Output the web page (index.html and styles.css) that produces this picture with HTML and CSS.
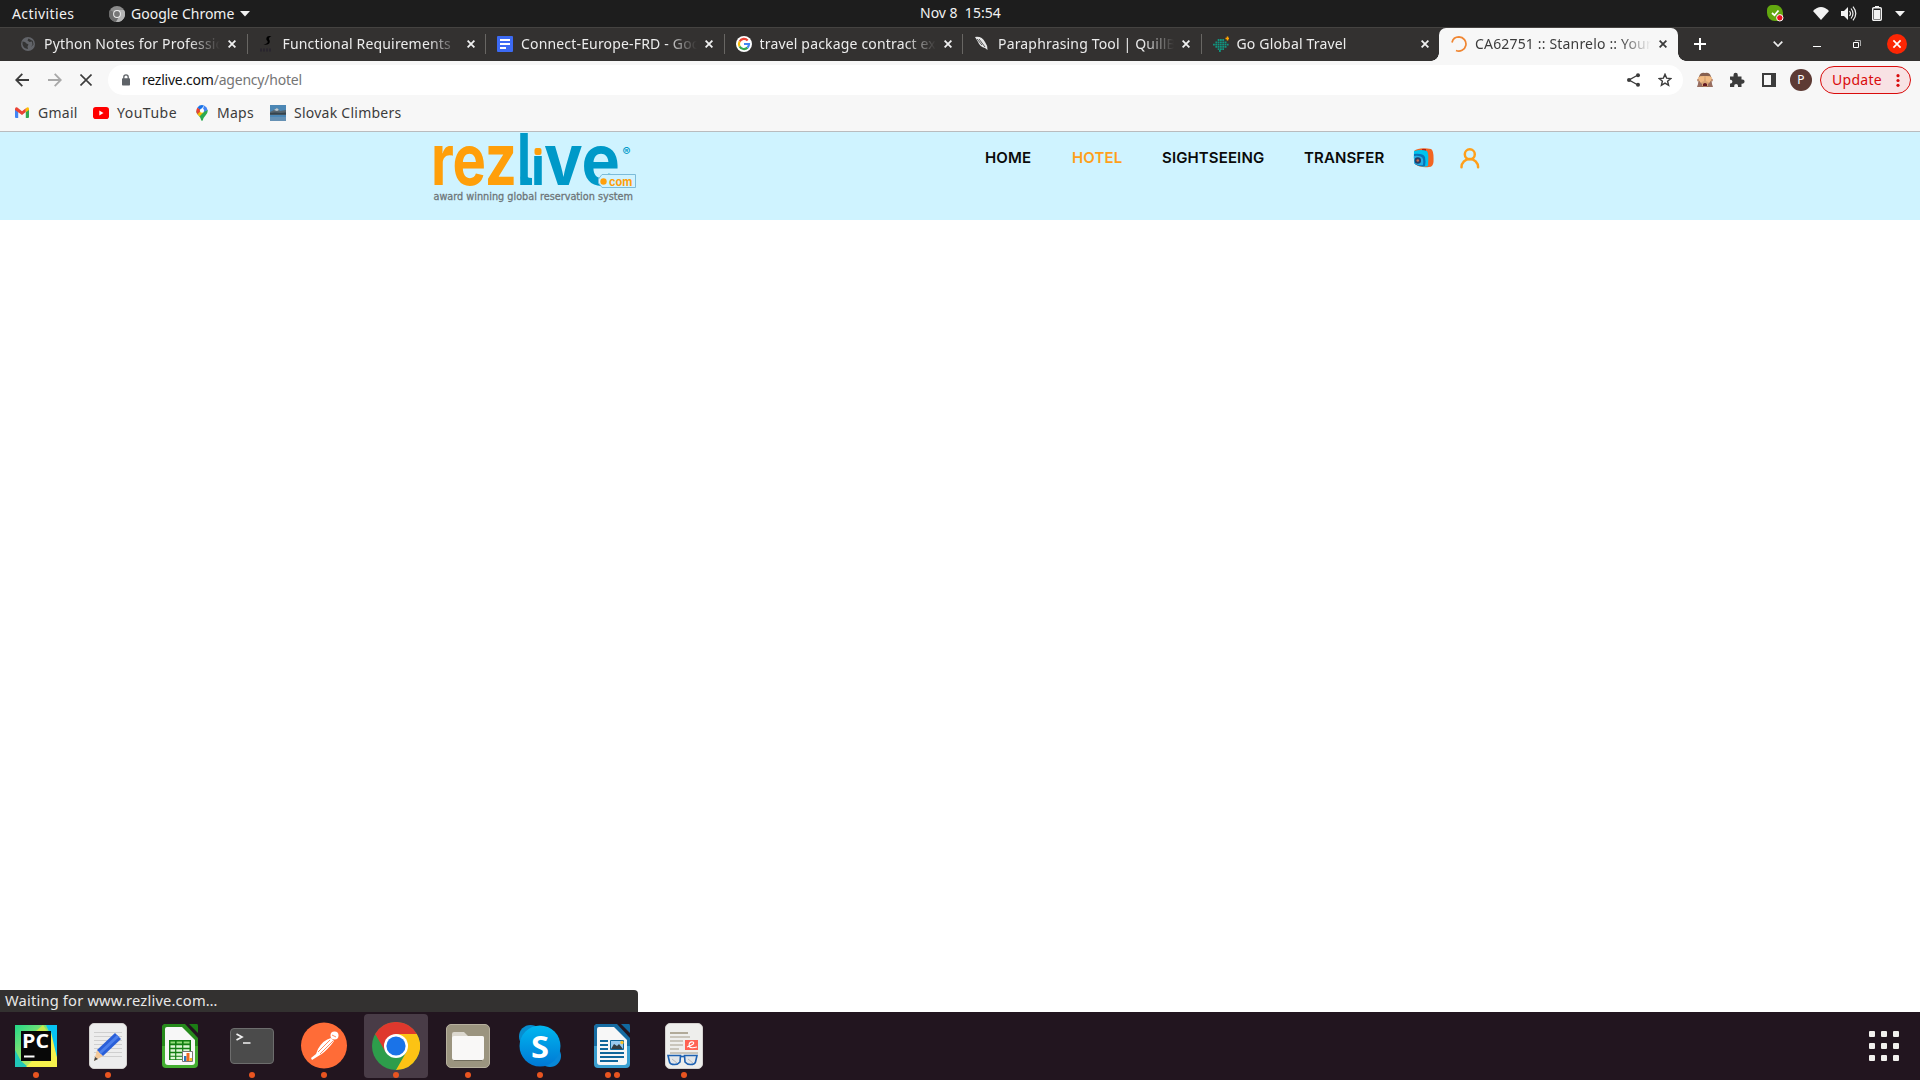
FILE: index.html
```html
<!DOCTYPE html>
<html lang="en">
<head>
<meta charset="utf-8">
<title>CA62751 :: Stanrelo</title>
<link rel="stylesheet" href="styles.css">
</head>
<body>
<div class="desktop">
  <header class="topbar">
    <span class="activities">Activities</span>
    <div class="appmenu">
      <svg width="16" height="16" viewBox="0 0 16 16"><circle cx="8" cy="8" r="8" fill="#8b8b8b"/><path d="M8 8L1 4A8 8 0 0 0 7 16L11 9Z" fill="#6d6d6d"/><path d="M8 4H15A8 8 0 0 1 7 16L11 9Z" fill="#b4b4b4"/><circle cx="8" cy="8" r="3.9" fill="#eee"/><circle cx="8" cy="8" r="2.9" fill="#777"/></svg>
      <span class="appname">Google Chrome</span>
      <svg width="10" height="6" viewBox="0 0 10 6"><path d="M0 0H10L5 5.5Z" fill="#f2f2f2"/></svg>
    </div>
    <span class="clock">Nov 8&nbsp; 15:54</span>
    <div class="tray">
      <svg class="tray-skype" width="17" height="17" viewBox="0 0 17 17"><path d="M5 0H9A8 8 0 0 1 16 8V12A4 4 0 0 1 12 16H8A8 8 0 0 1 0 8V5A5 5 0 0 1 5 0Z" fill="#62a70f"/><path d="M5 8L7.5 10.3L11.5 5.5" stroke="#fff" stroke-width="1.8" fill="none"/><circle cx="12.8" cy="12.8" r="3.2" fill="#e81123" stroke="#fff"/></svg>
      <svg class="tray-wifi" width="16" height="13" viewBox="0 0 16 13"><path d="M0 4Q8-4 16 4L8 13Z" fill="#f2f2f2"/></svg>
      <svg class="tray-volume" width="16" height="15" viewBox="0 0 16 15"><path d="M0 5H3L7 1V14L3 10H0Z" fill="#f2f2f2"/><path d="M8.500 5Q10.500 7.500 8.500 10M10 2.500Q14 7.500 10 12.500M12 .7Q17.500 7.500 12 14.300" stroke="#eee" stroke-width="1.2" fill="none"/></svg>
      <svg class="tray-battery" width="10" height="15" viewBox="0 0 10 15"><path d="M3 0H7V2H3Z" fill="#f2f2f2"/><rect x=".7" y="1.700" width="8.600" height="12.600" rx="1" fill="none" stroke="#f2f2f2" stroke-width="1.400"/><path d="M2 4H8V13H2Z" fill="#f2f2f2"/></svg>
      <svg width="10" height="6" viewBox="0 0 10 6"><path d="M0 0H10L5 5.500Z" fill="#f2f2f2"/></svg>
    </div>
  </header>

  <div class="tabstrip">
    <div class="tab">
      <svg class="favicon" viewBox="0 0 16 16"><circle cx="8" cy="8" r="7" fill="#626469"/><path d="M2.500 5.500L5 6L6.500 7.500L8.500 8.500L7.500 10.500L8 13Q3.500 12.500 2.500 8.500ZM8.500 2.500L7.500 4.500L9.500 6L12 5.500L12.500 8.500L11 11L13.500 8.500L12.800 5Z" fill="#343434"/></svg>
      <span class="title">Python Notes for Professionals</span>
      <svg class="close" viewBox="0 0 8 8"><path d="M.6 .6L7.400 7.400M7.400 .6L.6 7.400"/></svg>
    </div>
    <div class="tab">
      <svg class="favicon" viewBox="0 0 16 16"><path d="M12.500 0Q6.500 -.5 7.500 4Q10 6 7.500 7.500Q6 8.500 4.500 8.500Q10 9.500 10.800 6Q10.800 4 9.800 3Q10 1 12.500 0Z" fill="#000"/><path d="M1 14H12" stroke="#29252d" stroke-width="3" stroke-dasharray="2 1"/></svg>
      <span class="title">Functional Requirements</span>
      <svg class="close" viewBox="0 0 8 8"><path d="M.6 .6L7.400 7.400M7.400 .6L.6 7.400"/></svg>
    </div>
    <div class="tab">
      <svg class="favicon" viewBox="0 0 16 16"><rect width="16" height="16" rx="1" fill="#3c6af3"/><path d="M3 4H13M3 8H13M3 12H9" stroke="#fff" stroke-width="2"/></svg>
      <span class="title">Connect-Europe-FRD - Goog</span>
      <svg class="close" viewBox="0 0 8 8"><path d="M.6 .6L7.400 7.400M7.400 .6L.6 7.400"/></svg>
    </div>
    <div class="tab">
      <svg class="favicon" viewBox="0 0 16 16"><circle cx="8" cy="8" r="8" fill="#fff"/><g fill="none" stroke-width="2.200"><path d="M3.600 5.500A5 5 0 0 1 11.700 4.400" stroke="#ea4335"/><path d="M3.600 10.500A5 5 0 0 1 3.600 5.500" stroke="#fbbc05"/><path d="M11.500 11.600A5 5 0 0 1 3.600 10.500" stroke="#34a853"/><path d="M8 8H13A5 5 0 0 1 11.500 11.600" stroke="#4285f4"/></g></svg>
      <span class="title">travel package contract exa</span>
      <svg class="close" viewBox="0 0 8 8"><path d="M.6 .6L7.400 7.400M7.400 .6L.6 7.400"/></svg>
    </div>
    <div class="tab">
      <svg class="favicon" viewBox="0 0 16 16"><path d="M1 1Q8 0 11 6Q14 10 13.500 14L11 12Q6 11 4 6Z" fill="#e7e7e7"/><path d="M5 3L11 11M3 3L8 9" stroke="#333" stroke-width=".8"/></svg>
      <span class="title">Paraphrasing Tool | QuillBot</span>
      <svg class="close" viewBox="0 0 8 8"><path d="M.6 .6L7.400 7.400M7.400 .6L.6 7.400"/></svg>
    </div>
    <div class="tab last">
      <svg class="favicon" viewBox="0 0 16 16"><g stroke="#11957f" stroke-width="1.800" stroke-dasharray="1.800 .5"><path d="M4.700 4H11.600M2.400 6.300H14M0 8.600H16M2.400 10.900H14M4.700 13.200H11M6 15H8"/></g><path d="M14.500 .5V4.500M12.500 2.500H16.500" stroke="#ffa400" stroke-width="1.500"/></svg>
      <span class="title">Go Global Travel</span>
      <svg class="close" viewBox="0 0 8 8"><path d="M.6 .6L7.400 7.400M7.400 .6L.6 7.400"/></svg>
    </div>
    <div class="tab active">
      <svg class="favicon" viewBox="0 0 16 16"><path d="M1 6.500A7.200 7.200 0 0 1 8 .9A7.100 7.100 0 1 1 5 14.500" fill="none" stroke="#f08632" stroke-width="1.700"/></svg>
      <span class="title">CA62751 :: Stanrelo :: Your</span>
      <svg class="close" viewBox="0 0 8 8"><path d="M.6 .6L7.400 7.400M7.400 .6L.6 7.400"/></svg>
    </div>
    <svg class="newtab" width="12" height="12" viewBox="0 0 12 12"><path d="M6 0V12M0 6H12" stroke="#fff" stroke-width="2"/></svg>
    <div class="winctl">
      <svg width="10" height="6" viewBox="0 0 10 6"><path d="M.7 .7L5 5L9.300 .7" stroke="#eee" stroke-width="1.700" fill="none"/></svg>
      <svg class="min" width="8" height="2" viewBox="0 0 8 2"><path d="M0 .5H8" stroke="#fff"/></svg>
      <svg width="8" height="8" viewBox="0 0 8 8"><path d="M.5 2.500H5.500V7.500H.5Z" stroke="#fff" fill="none"/><path d="M2 .5H7.500V6" stroke="#aaa" fill="none"/></svg>
      <svg width="20" height="20" viewBox="0 0 20 20"><circle cx="10" cy="10" r="10" fill="#fc2604"/><path d="M6.400 6.400L13.600 13.600M13.600 6.400L6.400 13.600" stroke="#fff" stroke-width="1.700"/></svg>
    </div>
  </div>

  <div class="toolbar">
    <div class="navbtns">
      <svg width="14" height="14" viewBox="0 0 14 14"><path d="M14 7H1.500M7.300 .8L1.200 7L7.300 13.200" stroke="#3c3c3c" stroke-width="1.800" fill="none"/></svg>
      <svg width="14" height="14" viewBox="0 0 14 14"><path d="M0 7H12.500M6.700 .8L12.800 7L6.700 13.200" stroke="#a8a8a8" stroke-width="1.800" fill="none"/></svg>
      <svg width="12" height="12" viewBox="0 0 12 12"><path d="M.5 .5L11.500 11.500M11.500 .5L.5 11.500" stroke="#3c3c3c" stroke-width="1.600"/></svg>
    </div>
    <div class="omnibox">
      <svg width="8" height="12" viewBox="0 0 8 12"><path d="M1.800 5V3A2.200 2.200 0 0 1 6.200 3V5" stroke="#5f6368" stroke-width="1.300" fill="none"/><rect y="4.300" width="8" height="7.200" rx=".8" fill="#5f6368"/></svg>
      <span class="url">rezlive.com<span class="path">/agency/hotel</span></span>
      <svg class="share" width="13" height="14" viewBox="0 0 13 14"><path d="M11 2L2 7L11 12" stroke="#3c3c3c" stroke-width="1.400" fill="none"/><g fill="#3c3c3c"><circle cx="11" cy="2.200" r="2"/><circle cx="2" cy="7" r="2"/><circle cx="11" cy="11.800" r="2"/></g></svg>
      <svg width="14" height="14" viewBox="0 0 14 14"><path d="M7 1.300L8.600 5.100L12.800 5.500L9.600 8.200L10.600 12.300L7 10.100L3.400 12.300L4.400 8.200L1.200 5.500L5.400 5.100Z" stroke="#3c3c3c" stroke-width="1.400" fill="none"/></svg>
    </div>
    <div class="exts">
      <svg width="16" height="16" viewBox="0 0 16 16"><path d="M2 5Q3 0 8 1Q13 0 14 5L15 15H1Z" fill="#876050"/><circle cx="1.500" cy="8" r="1.500" fill="#bd8e72"/><circle cx="14.500" cy="8" r="1.500" fill="#bd8e72"/><path d="M3 4H13V13Q8 16 3 13Z" fill="#d7a475"/><path d="M1 5L7.500 4L7 9L3 11ZM15 5L8.500 4L9 9L13 11Z" fill="#f1ba83"/><path d="M6 12Q8 10 10 12V14H6Z" fill="#641923"/><path d="M0 15L2 9L5 12L5 15ZM16 15L14 9L11 12L11 15Z" fill="#976e61"/></svg>
      <svg width="16" height="16" viewBox="0 0 16 16"><path d="M1 4.500H4.500V3A2.100 2.100 0 0 1 8.800 3V4.500H12.500V7.500H13.500A2 2 0 0 1 13.500 11.700H12.500V15H9V13.800A1.900 1.900 0 0 0 5.200 13.800V15H1V11.500H2A2 2 0 0 0 2 7.700H1Z" fill="#3c3c3c"/></svg>
      <svg width="14" height="14" viewBox="0 0 14 14"><path d="M0 0H14V14H0ZM2 2V12H9V2Z" fill="#3c3c3c" fill-rule="evenodd"/></svg>
      <span class="avatar">P</span>
    </div>
    <div class="update"><span class="update-label">Update</span><svg width="4" height="13" viewBox="0 0 4 13"><g fill="#d90b0b"><circle cx="2" cy="1.700" r="1.600"/><circle cx="2" cy="6.500" r="1.600"/><circle cx="2" cy="11.300" r="1.600"/></g></svg></div>
  </div>

  <nav class="bookmarks">
    <span class="bm"><svg width="14" height="11" viewBox="0 0 14 11"><path d="M0 2L3.200 4V11H1Q0 11 0 10Z" fill="#4285f4"/><path d="M14 2L10.800 4V11H13Q14 11 14 10Z" fill="#34a853"/><path d="M0 2Q0 0 2 .3L7 4.200L10.800 1.200V5L7 8L0 3Z" fill="#ea4335"/><path d="M10.800 1.200Q14-1 14 2V3L10.800 5.300Z" fill="#fbbc04"/></svg><span class="b1">Gmail</span></span>
    <span class="bm"><svg width="16" height="12" viewBox="0 0 16 12"><rect width="16" height="12" rx="2.800" fill="#f00"/><path d="M6.300 3.500V8.500L10.500 6Z" fill="#fff"/></svg><span class="b2">YouTube</span></span>
    <span class="bm"><svg width="12" height="16" viewBox="0 0 12 16"><path d="M1.300 9Q.2 7.500 .3 5.700L6 5.700L11.700 5Q12 8 9.500 10.500Q7.500 12.500 6.800 15.200Q6 16.200 5.200 15.200Q4.500 12.500 3 11Z" fill="#2bab50"/><path d="M1.500 2.400L5 5L1.700 9.500Q.2 8 .3 5.700Q.3 4 1.500 2.400Z" fill="#ea4335"/><path d="M1.500 2.400Q4-.8 8 .4L4.500 5.200Z" fill="#1a73e8"/><path d="M8 .4Q11 1.500 11.600 5L6 8Z" fill="#4285f4"/><path d="M1.500 9L4.300 6.500L7.600 7.300L3.500 11.600Z" fill="#fbbc04"/><circle cx="6" cy="5.700" r="2.100" fill="#fff"/></svg><span class="b3">Maps</span></span>
    <span class="bm"><svg width="16" height="16" viewBox="0 0 16 16"><path d="M0 0H16V16H0Z" fill="#4c87b5"/><path d="M0 7L4 5L7 3L10 6L16 5V10H0Z" fill="#56646d"/><path d="M4 5L7 3L9 5L7 6Z" fill="#c0cdd6"/><path d="M0 8L5 7.500L11 8L16 7.500V9.500H0Z" fill="#34434d"/><path d="M0 12H16V16H0Z" fill="#6691b4"/></svg><span class="b4">Slovak Climbers</span></span>
  </nav>

  <main class="page">
    <div class="site-header">
      <svg class="logo" width="206" height="72" viewBox="0 0 206 72">
        <g class="word">
          <text x="-2" y="53" textLength="86" lengthAdjust="spacingAndGlyphs" fill="#ff9f0a">rez</text>
          <text x="84" y="53" textLength="14" lengthAdjust="spacingAndGlyphs" fill="#0099c8">l</text>
          <text class="short" x="98" y="53" textLength="14" lengthAdjust="spacingAndGlyphs" fill="#0099c8">i</text>
          <text x="111" y="53" textLength="76" lengthAdjust="spacingAndGlyphs" fill="#0099c8">ve</text>
        </g>
        <path d="M92 40Q92 46 99 46V53H94Q87.500 53 87.500 45Z" fill="#0099c8"/>
        <rect x="98" y="10" width="14" height="13" fill="#cff3ff"/>
        <rect x="101.500" y="16" width="7" height="7" rx="2" fill="#ff9f0a"/>
        <path d="M169 42.500H202.500V55.500H169L165.500 51V47Z" fill="#cff3ff" stroke="#7cbbd9"/>
        <circle cx="170.500" cy="49.500" r="3.200" fill="#ff9f0a"/>
        <text class="com" x="176" y="53.500" textLength="23.500" lengthAdjust="spacingAndGlyphs">com</text>
        <text class="reg" x="189.500" y="24">®</text>
        <text class="tagline" x=".5" y="67.500" textLength="199.500" lengthAdjust="spacingAndGlyphs">award winning global reservation system</text>
      </svg>
      <div class="menu">
        <span class="m1">HOME</span><span class="m2 current">HOTEL</span><span class="m3">SIGHTSEEING</span><span class="m4">TRANSFER</span>
        <svg class="bag" width="21" height="20" viewBox="0 0 21 20"><path d="M1 3Q6-1 18 1Q21 2 20.500 14Q20 19 16 19Q7 20 2 16Z" fill="#f26522"/><path d="M9 1H13V3H9Z" fill="#b51e16"/><path d="M1 3Q9 1 14 3Q16 5 15 18Q9 20 2 16Q0 10 1 3Z" fill="#00c3ee"/><path d="M1 6Q10 5 12 9Q13 14 12 18Q5 19 1 15Z" fill="#0872b8"/><path d="M1 8Q8 7 10 11Q10.500 14 10 17Q5 18 1 15Z" fill="#23afe5"/><circle cx="4.800" cy="12.500" r="3.200" fill="#273c66"/><circle cx="4.800" cy="12.500" r="1.300" fill="#ca6b4d"/></svg>
        <svg width="20" height="21" viewBox="0 0 20 21"><g fill="none" stroke="#ff9f1a" stroke-width="2.500" stroke-linecap="round"><circle cx="9.800" cy="6.300" r="5"/><path d="M1.500 19.300A8.300 8.300 0 0 1 18.100 19.300"/></g></svg>
      </div>
    </div>
    <div class="status">Waiting for www.rezlive.com…</div>
  </main>

  <footer class="dock">
    <div class="apps">
      <div class="app"><svg viewBox="0 0 48 48"><defs><linearGradient id="pc" x1="0" y1="0" x2="1" y2="1"><stop offset="0" stop-color="#21d789"/><stop offset=".5" stop-color="#9be56b"/><stop offset="1" stop-color="#fcf84a"/></linearGradient></defs><path d="M3 3H45V45H3Z" fill="url(#pc)"/><path d="M34 3H45V37L38 12Z" fill="#07c3f2"/><path d="M24 9L31 3L35 9Z" fill="#c7e94c"/><path d="M3 28L9 39L16 45H3Z" fill="#20c7b8"/><path d="M39 10L45 36V45H14L20 39H39Z" fill="#f6f14c"/><path d="M9 9H39V39H9Z" fill="#080808"/><path d="M12 33.500H22.500V35.500H12Z" fill="#fff"/><text class="pc" x="10" y="26" textLength="27" lengthAdjust="spacingAndGlyphs">PC</text></svg><i class="dots"><b></b></i></div>
      <div class="app"><svg viewBox="0 0 48 48"><rect x="5.500" y="1.500" width="37" height="45" rx="4.500" fill="#ededed" stroke="#d4d1cf"/><path d="M10 10.500H38M10 14.500H38M10 18.500H38M10 22.500H38M10 26.500H38M10 30.500H38M10 34.500H38" stroke="#cfcfcf"/><path d="M10 39L13 28L19 34Z" fill="#f4c99a"/><path d="M10 39L11 35L14 37Z" fill="#444"/><path d="M13 28L31 11L37 17L19 34Z" fill="#2a5fd8"/><path d="M15 30L33 13L35 15L17 32Z" fill="#4d80ec"/></svg><i class="dots"><b></b></i></div>
      <div class="app"><svg viewBox="0 0 48 48"><path d="M10 2H27L42 17V42Q42 46 38 46H10Q6 46 6 42V6Q6 2 10 2Z" fill="#43ad30"/><path d="M10 2H29L42 16V24H6V6Q6 2 10 2Z" fill="#268a1b"/><path d="M11 5H26L39 18V40Q39 43 36 43H12Q9 43 9 40V7Q9 5 11 5Z" fill="#f7f7f7"/><path d="M33 2H41Q42 2 42 4V11Z" fill="#1c7d15"/><path d="M13 18H35V38H13Z" fill="#137d11"/><g fill="#92dd79"><path d="M14.500 19.500H19V21.500H14.500ZM20.500 19.500H26V21.500H20.500ZM27.500 19.500H33.500V21.500H27.500Z"/></g><g stroke="#dff6d5" stroke-width="2.500"><path d="M14.500 24.500H33.500M14.500 28.500H33.500M14.500 32.500H33.500M14.500 36H33.500"/></g><path d="M19.700 18V38M26.700 18V38" stroke="#137d11" stroke-width="1.200"/><path d="M26.500 29.500H36.500V39.500H26.500Z" fill="#fff" stroke="#777"/><path d="M28 34H30.500V39H28Z" fill="#2879bf"/><path d="M30.500 31H33.500V39H30.500Z" fill="#ef6a20"/><path d="M33.500 36H36V39H33.500Z" fill="#f4be28"/></svg><i class="dots"></i></div>
      <div class="app"><svg viewBox="0 0 48 48"><rect x="2.500" y="6.500" width="43" height="35" rx="3.500" fill="#4b4b4b" stroke="#6d6d6d"/><path d="M8.500 12L14 15L8.500 18M15 21H22.500" fill="none" stroke="#f2f2f2" stroke-width="1.700"/></svg><i class="dots"><b></b></i></div>
      <div class="app"><svg viewBox="0 0 48 48"><circle cx="24" cy="23.500" r="23" fill="#ff6c37"/><circle cx="34.500" cy="13.500" r="4" fill="#fff"/><path d="M31 16Q23 18 18 27L16 32L11 36L12 38L20 33Q24 31 31 23L34 19Z" fill="#fff"/><path d="M30 18L18 30M33 19L20 32M32 13L36 15" stroke="#ff6c37" stroke-width=".8"/></svg><i class="dots"><b></b></i></div>
      <div class="app focused"><svg viewBox="0 0 48 48"><circle cx="24" cy="24" r="24" fill="#2d9d4b"/><path d="M3.200 12A24 24 0 0 1 44.800 12L34 24H14Z" fill="#df382d"/><path d="M24 12H44.800A24 24 0 0 1 24 48L34.400 30Z" fill="#fcc314"/><path d="M3.200 12L13.600 30L24 24L24 12Z" fill="#df382d"/><circle cx="24" cy="24" r="12" fill="#fff"/><circle cx="24" cy="24" r="9.600" fill="#1a73e8"/></svg><i class="dots"><b></b></i></div>
      <div class="app"><svg viewBox="0 0 48 48"><rect x="2.500" y="2.500" width="43" height="43" rx="4.500" fill="#9b947f" stroke="#b7b09e"/><path d="M8 14V12Q8 10 10 10H20L24 14H38Q40 14 40 16V20H8Z" fill="#dcd8cf"/><rect x="8" y="14" width="32" height="24" rx="2" fill="#f9f8f7"/><path d="M10 38.500H38" stroke="#706b5b"/></svg><i class="dots"><b></b></i></div>
      <div class="app"><svg viewBox="0 0 48 48"><defs><linearGradient id="sk" x2="0" y2="1"><stop stop-color="#00b7f0"/><stop offset="1" stop-color="#0078d4"/></linearGradient></defs><circle cx="14.500" cy="14.500" r="11.500" fill="#078dcf"/><circle cx="34" cy="34" r="11" fill="#0788d8"/><circle cx="24" cy="24" r="20.500" fill="url(#sk)"/><text class="skype" x="15" y="35.500" textLength="18" lengthAdjust="spacingAndGlyphs">S</text></svg><i class="dots"><b></b></i></div>
      <div class="app"><svg viewBox="0 0 48 48"><path d="M10 2H27L42 17V42Q42 46 38 46H10Q6 46 6 42V6Q6 2 10 2Z" fill="#3a9fd0"/><path d="M10 2H29L42 16V24H6V6Q6 2 10 2Z" fill="#166ca2"/><path d="M11 5H26L39 18V40Q39 43 36 43H12Q9 43 9 40V7Q9 5 11 5Z" fill="#f7f7f7"/><path d="M33 2H41Q42 2 42 4V11Z" fill="#1169a0"/><path d="M12 19H20M12 23H20M12 27H20M12 31H36M12 35H36M12 39H30" stroke="#11679b" stroke-width="1.800"/><path d="M22.500 18.500H35.500V27.500H22.500Z" fill="#9bcaee" stroke="#11679b"/><path d="M23 27L26 22L29 24L31 22L35 27Z" fill="#343d42"/><circle cx="34" cy="20.500" r="1.700" fill="#fbc32b"/></svg><i class="dots"><b></b><b></b></i></div>
      <div class="app"><svg viewBox="0 0 48 48"><rect x="5.500" y="1.500" width="37" height="45" rx="4.500" fill="#eeeeec" stroke="#d4d1cf"/><path d="M10 11H28" stroke="#b1aa99" stroke-width="2"/><path d="M10 15H30M10 19H23M10 23H23M10 27H19M10 31H38" stroke="#c9c5bb" stroke-width="1.800"/><path d="M25 18H38V28H25Z" fill="#ff6253"/><path d="M27 25Q36 22 33 20Q29 19 29 24Q30 27 37 25" fill="none" stroke="#fff" stroke-width="1.100"/><g stroke="#1e61b1" stroke-width="1.600" fill="#e2e6ea"><path d="M8 33.500H20.500L20 40Q18 42.500 14.500 42.500Q10 42.500 9.500 40ZM37 33.500H24.500L25 40Q27 42.500 30.500 42.500Q35 42.500 35.500 40Z"/><path d="M20 34.500H25"/></g><path d="M12 37L17 41M28 37L33 41" stroke="#bbb"/></svg><i class="dots"><b></b></i></div>
    </div>
    <svg class="grid" width="30" height="30" viewBox="0 0 30 30"><g fill="#f2f0ee"><rect width="6" height="6" rx="1"/><rect x="12" width="6" height="6" rx="1"/><rect x="24" width="6" height="6" rx="1"/><rect y="12" width="6" height="6" rx="1"/><rect x="12" y="12" width="6" height="6" rx="1"/><rect x="24" y="12" width="6" height="6" rx="1"/><rect y="24" width="6" height="6" rx="1"/><rect x="12" y="24" width="6" height="6" rx="1"/><rect x="24" y="24" width="6" height="6" rx="1"/></g></svg>
  </footer>
</div>
</body>
</html>
```
FILE: styles.css
```css
* { box-sizing: border-box; }
body { margin: 0; font-family: "Noto Sans", "Open Sans", sans-serif; font-size: 14px; }
svg { display: block; flex: none; }
.desktop { width: 1920px; height: 1080px; display: flex; flex-direction: column; overflow: hidden; background: #fff; white-space: nowrap; }

.topbar { height: 27px; flex: none; background: #1d1d1d; color: #f2f2f2; display: grid; grid-template-columns: 109px 811px 1fr auto; align-items: center; padding-right: 15px; }
.activities { padding-left: 12px; letter-spacing: .4px; }
.appmenu { display: flex; align-items: center; }
.appname { width: 104px; margin: 0 5px 0 6px; }
.clock { line-height: 18px; padding-bottom: 1px; }
.tray { display: flex; align-items: center; }
.tray-skype { margin-right: 29px; }
.tray-wifi { margin-right: 12px; }
.tray-volume { margin-right: 15px; }
.tray-battery { margin-right: 13px; }

.tabstrip { height: 34px; flex: none; background: #333130; border-top: 1px solid #454341; display: flex; align-items: stretch; padding-left: 8px; color: #ececec; letter-spacing: .17px; }
.tab { position: relative; width: 238.500px; flex: none; display: flex; align-items: center; padding: 0 0 1px 12px; }
.tab::after { content: ""; position: absolute; right: -1px; top: 6px; width: 1px; height: 20px; background: #686663; }
.tab.last::after { display: none; }
.favicon { width: 16px; height: 16px; }
.title { width: 176px; margin-left: 8px; padding-bottom: 2px; overflow: hidden; -webkit-mask-image: linear-gradient(90deg, #000 145px, transparent 176px); mask-image: linear-gradient(90deg, #000 145px, transparent 176px); }
.close { width: 8px; height: 8px; margin-left: 8px; fill: none; stroke: #f0f0f0; stroke-width: 1.800; }
.tab.active { background: #f7f7f7; color: #3c3c3c; border-radius: 7px 7px 0 0; }
.tab.active .close { stroke: #3c3c3c; }
.tab.active::before, .tab.active::after { content: ""; position: absolute; top: auto; bottom: 0; width: 8px; height: 8px; }
.tab.active::before { left: -8px; background: radial-gradient(circle at 0 0, transparent 7.500px, #f7f7f7 8px); }
.tab.active::after { right: -8px; background: radial-gradient(circle at 100% 0, transparent 7.500px, #f7f7f7 8px); }
.newtab { margin: 10px 0 0 16px; }
.winctl { margin-left: auto; display: flex; align-items: center; gap: 30px; padding: 0 13px 1px 0; }
.winctl .min { margin: 5px 2px 0 0; }
.winctl svg:last-child { margin-left: -4px; }

.toolbar { height: 38px; flex: none; background: #f7f7f7; display: flex; align-items: center; padding: 0 9px 0 15px; }
.navbtns { display: flex; align-items: center; gap: 18.500px; width: 93px; }
.omnibox { width: 1575px; height: 30px; border-radius: 15px; background: #fff; display: flex; align-items: center; padding: 0 11px 0 14px; }
.url { margin-left: 12px; color: #111; letter-spacing: -.22px; padding-bottom: 1px; }
.path { color: #757575; }
.share { margin-left: auto; margin-right: 18px; }
.exts { display: flex; align-items: center; gap: 16px; margin-left: 14px; }
.exts svg:nth-child(3) { margin-left: 1px; margin-right: -2px; }
.avatar { width: 22px; height: 22px; border-radius: 50%; background: #5d3a34; color: #fff; font-size: 12px; line-height: 22px; text-align: center; }
.update { width: 91px; height: 28px; margin-left: auto; border: 1px solid #d90b0b; border-radius: 14px; background: #f8e2e4; color: #d90b0b; display: flex; align-items: center; justify-content: space-between; padding: 0 10px 0 11px; letter-spacing: .3px; }
.update-label { padding-bottom: 1px; }

.bookmarks { height: 33px; flex: none; background: #f7f7f7; border-bottom: 1px solid #b9bbbe; display: flex; padding: 0 15px 5px; color: #3c3c3c; letter-spacing: .25px; }
.bm { display: flex; align-items: center; }
.bm span { margin-left: 8px; }
.bm .b1 { width: 55px; margin-left: 9px; }
.bm .b2 { width: 79px; letter-spacing: .5px; }
.bm .b3 { width: 53px; margin-left: 9px; }

.page { flex: 1; display: flex; flex-direction: column; justify-content: space-between; }
.site-header { height: 88px; background: #cff3ff; display: flex; align-items: flex-start; padding-left: 433px; }
.word { font: 700 71px Inter, sans-serif; }
.word .short { font-size: 53px; }
.com { font: 700 11.500px Inter, sans-serif; fill: #ff9f0a; }
.reg { font: 600 12px Inter, sans-serif; fill: #0099c8; }
.tagline { font: 500 10.500px "DejaVu Sans", sans-serif; fill: #6d7578; stroke: #6d7578; stroke-width: .3px; }
.menu { display: flex; align-items: center; margin: 15px 0 0 346px; height: 22px; font: 600 15px/22px Inter, sans-serif; letter-spacing: .12px; color: #0a0a0a; }
.current { color: #ff9f1a; }
.m1 { width: 87px; } .m2 { width: 90px; } .m3 { width: 142px; } .m4 { width: 109px; }
.bag { margin-right: 26px; }
.status { width: 638px; height: 22px; background: #333130; color: #e8e8e8; font-size: 14.700px; letter-spacing: .18px; line-height: 21px; padding-left: 5px; border-radius: 0 4px 0 0; }

.dock { height: 68px; flex: none; background: #22151f; display: flex; justify-content: space-between; align-items: flex-start; padding: 2px 21px 0 4px; }
.apps { display: flex; gap: 8px; }
.app { width: 64px; height: 64px; border-radius: 4px; display: flex; flex-direction: column; align-items: center; padding-top: 8px; }
.app svg { width: 48px; height: 48px; }
.focused { background: #493c47; }
.dots { display: flex; gap: 3px; margin-top: 2px; }
.dots b { width: 6px; height: 6px; border-radius: 50%; background: #e95420; }
.grid { margin-top: 17px; }
.pc { font: 700 19px "Open Sans", sans-serif; fill: #fff; }
.skype { font: 700 31px "Open Sans", sans-serif; fill: #fff; }
```
